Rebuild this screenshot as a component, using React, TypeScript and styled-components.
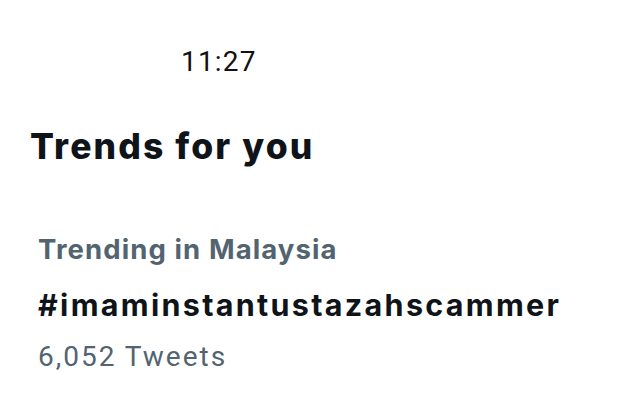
import React from 'react';
import styled, { createGlobalStyle } from 'styled-components';

const GlobalStyle = createGlobalStyle`
  html, body {
    margin: 0;
    padding: 0;
    background: #ffffff;
  }
`;

interface Trend {
  context: string;
  name: string;
  count: string;
}

const trend: Trend = {
  context: 'Trending in Malaysia',
  name: '#imaminstantustazahscammer',
  count: '6,052 Tweets',
};

const App = () => {
  return (
    <Screen>
      <GlobalStyle />
      <StatusBar>
        <Clock>11:27</Clock>
      </StatusBar>
      <Heading>Trends for you</Heading>
      <TrendItem>
        <Context>{trend.context}</Context>
        <TrendName>{trend.name}</TrendName>
        <Count>{trend.count}</Count>
      </TrendItem>
    </Screen>
  );
};

const Screen = styled.div`
  width: 627px;
  height: 414px;
  background: #ffffff;
  display: flex;
  flex-direction: column;
  overflow: hidden;
`;
const StatusBar = styled.div`
  display: flex;
  padding: 44px 0 0 181px;
  height: 36px;
`;
const Clock = styled.span`
  font-family: Roboto, sans-serif;
  font-size: 28px;
  line-height: 36px;
  letter-spacing: 1.2px;
  color: #111111;
`;
const Heading = styled.h1`
  margin: 46px 0 0 30px;
  font-family: Inter, sans-serif;
  font-weight: 800;
  font-size: 35.5px;
  line-height: 42px;
  letter-spacing: 2.1px;
  color: #0f1419;
`;
const TrendItem = styled.div`
  display: flex;
  flex-direction: column;
  padding: 64px 0 0 38px;
`;
const Context = styled.div`
  font-family: Inter, sans-serif;
  font-weight: 700;
  font-size: 27.5px;
  line-height: 34px;
  letter-spacing: 1.1px;
  color: #536471;
`;
const TrendName = styled.div`
  margin-top: 21px;
  font-family: Inter, sans-serif;
  font-weight: 700;
  font-size: 30.5px;
  line-height: 36px;
  letter-spacing: 2.3px;
  color: #0f1419;
`;
const Count = styled.div`
  margin-top: 17px;
  font-family: Roboto, sans-serif;
  font-size: 28px;
  line-height: 34px;
  letter-spacing: 2px;
  color: #536471;
`;

export default App;
